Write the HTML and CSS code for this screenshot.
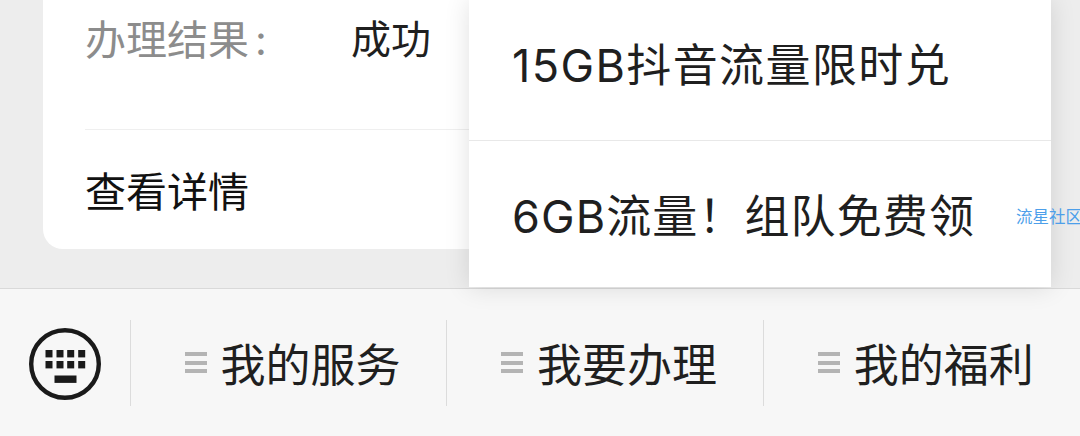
FILE: index.html
```html
<!DOCTYPE html>
<html lang="zh-CN">
<head>
    <meta charset="UTF-8">
    <title>我的服务</title>
    <link rel="stylesheet" href="styles.css">
</head>
<body>
    <div class="content">
        <div class="card">
            <div class="result-row">
                <span class="result-label">办理结果<span class="result-colon">:</span></span>
                <span class="result-value">成功</span>
            </div>
            <div class="detail-row">查看详情</div>
        </div>

        <div class="popup">
            <div class="popup-item popup-item-first">15GB抖音流量限时兑</div>
            <div class="popup-item">6GB流量！组队免费领</div>
        </div>

        <div class="watermark">流星社区</div>
    </div>

    <div class="menu-bar">
        <div class="keyboard-btn">
            <svg width="72" height="72" viewBox="0 0 72 72">
                <circle cx="36" cy="36" r="33.8" fill="none" stroke="#1a1a1a" stroke-width="4.4"/>
                <g fill="#1a1a1a">
                    <rect x="16.5" y="22" width="7" height="7.4"/>
                    <rect x="27.5" y="22" width="7" height="7.4"/>
                    <rect x="38.2" y="22" width="7" height="7.4"/>
                    <rect x="49.2" y="22" width="7" height="7.4"/>
                    <rect x="16.5" y="33" width="7" height="7.4"/>
                    <rect x="27.5" y="33" width="7" height="7.4"/>
                    <rect x="38.2" y="33" width="7" height="7.4"/>
                    <rect x="49.2" y="33" width="7" height="7.4"/>
                    <rect x="25.5" y="47.5" width="22" height="7.4"/>
                </g>
            </svg>
        </div>
        <div class="menu-tab"><span class="menu-icon"></span>我的服务</div>
        <div class="menu-tab"><span class="menu-icon"></span>我要办理</div>
        <div class="menu-tab"><span class="menu-icon"></span>我的福利</div>
    </div>
</body>
</html>
```

FILE: styles.css
```css
* {
    margin: 0;
    padding: 0;
    box-sizing: border-box;
}

body {
    width: 1080px;
    height: 436px;
    overflow: hidden;
    background: #ededed;
    font-family: "Inter", "Noto Sans CJK SC", sans-serif;
    color: #1f1f1f;
}

.content {
    position: relative;
    height: 288px;
    padding-left: 43px;
}

.card {
    width: 960px;
    height: 249px;
    background: #fff;
    border-radius: 0 0 20px 20px;
    padding: 0 42px;
}

.result-row {
    display: flex;
    align-items: center;
    height: 130px;
    padding-bottom: 56px;
    border-bottom: 1px solid #efefef;
    font-size: 41px;
}

.result-label {
    width: 266px;
    color: #8c8c8c;
}

.result-colon {
    margin-left: 6px;
}

.result-value {
    font-size: 40px;
}

.detail-row {
    height: 119px;
    line-height: 124px;
    font-size: 41px;
    color: #111;
}

.popup {
    position: absolute;
    top: 0;
    left: 469px;
    width: 582px;
    height: 287px;
    background: #fff;
    box-shadow: 0 0 24px rgba(0,0,0,0.12);
}

.popup-item {
    height: 147px;
    padding-left: 43px;
    line-height: 152px;
    font-size: 45px;
    letter-spacing: 1.1px;
    white-space: nowrap;
}

.popup-item-first {
    height: 141px;
    line-height: 131px;
    letter-spacing: 1.4px;
    border-bottom: 1px solid #e8e8e8;
}

.watermark {
    position: absolute;
    top: 205px;
    left: 1016px;
    font-size: 16.5px;
    line-height: 24px;
    white-space: nowrap;
    color: #4d9fea;
}

.menu-bar {
    display: flex;
    align-items: center;
    height: 148px;
    background: #f7f7f7;
    border-top: 1px solid #d9d9d9;
}

.keyboard-btn {
    display: flex;
    align-items: center;
    width: 131px;
    height: 86px;
    padding-top: 2px;
    padding-left: 29px;
    border-right: 1px solid #dcdcdc;
}

.menu-tab {
    display: flex;
    align-items: center;
    justify-content: center;
    width: 316.5px;
    height: 86px;
    padding-left: 8px;
    font-size: 45px;
    border-right: 1px solid #dcdcdc;
}

.menu-tab:last-child {
    border-right: none;
}

.menu-icon {
    width: 22px;
    height: 21px;
    margin-right: 14px;
    border-top: 4px solid #b4b4b4;
    border-bottom: 4px solid #b4b4b4;
    background: linear-gradient(#b4b4b4, #b4b4b4) center / 100% 4px no-repeat;
}
```
